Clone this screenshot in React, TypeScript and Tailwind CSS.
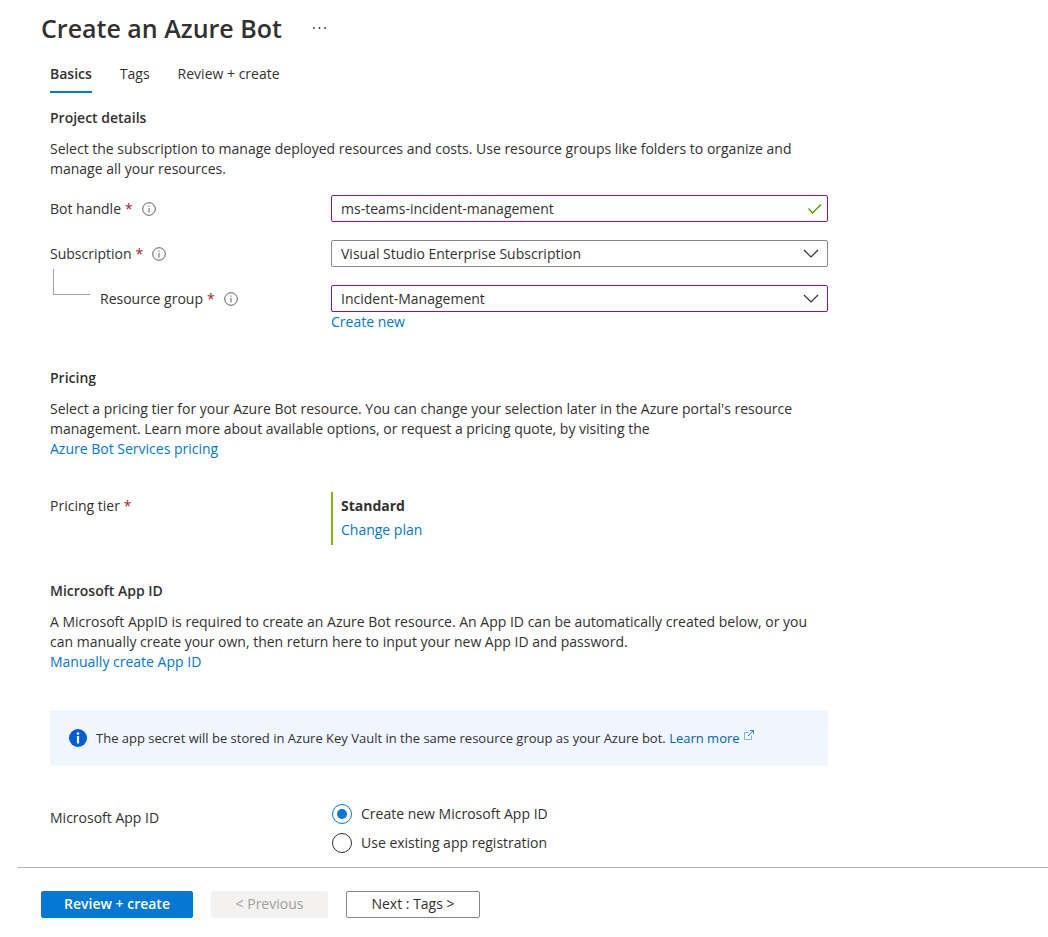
import { useState, type ReactNode } from "react";

const linkClass = "text-[#0078d4] hover:underline";

function InfoIcon() {
  return (
    <svg className="size-[14px] shrink-0" viewBox="0 0 14 14" fill="none" stroke="#605e5c" aria-hidden="true">
      <circle cx="7" cy="7" r="6.3" />
      <path d="M7 6v4.5M7 3.6v1.2" />
    </svg>
  );
}

function Chevron() {
  return (
    <svg className="pointer-events-none absolute top-2 right-[9px] h-3 w-4" viewBox="0 0 16 12" fill="none" stroke="#323130" strokeWidth="1.2" aria-hidden="true">
      <path d="M1 2l7 7 7-7" />
    </svg>
  );
}

function Required() {
  return <span className="ml-1 text-[#a4262c]">*</span>;
}

function FieldLabel({ htmlFor, children }: { htmlFor: string; children: ReactNode }) {
  return (
    <div className="flex h-[27px] items-center gap-[9px]">
      <label htmlFor={htmlFor}>
        {children}
        <Required />
      </label>
      <InfoIcon />
    </div>
  );
}

function Heading({ children }: { children: ReactNode }) {
  return <h2 className="mb-[11px] font-semibold">{children}</h2>;
}

const rowClass = "grid grid-cols-[281px_minmax(0,1fr)]";
const boxClass = "block h-[27px] w-full appearance-none rounded-xs border bg-white pr-8 pl-[9px] outline-none";
const radioClass =
  "grid size-5 shrink-0 appearance-none place-content-center rounded-full border border-[#323130] before:size-[10px] before:rounded-full checked:border-[#0078d4] checked:before:bg-[#0078d4]";

export default function App() {
  const [handle, setHandle] = useState("ms-teams-incident-management");
  const [appId, setAppId] = useState("new");

  return (
    <div className="flex min-h-screen flex-col bg-white font-['Open_Sans','Noto_Sans',sans-serif] text-sm leading-5 text-[#323130]">
      <header className="flex items-center gap-[30px] px-[41px] pt-[11px]">
        <h1 className="text-[25px] leading-[34px] font-semibold">Create an Azure Bot</h1>
        <button type="button" aria-label="More actions">
          <svg className="h-1 w-4" viewBox="0 0 16 4" fill="#323130" aria-hidden="true">
            <circle cx="2" cy="2" r="0.9" />
            <circle cx="7.5" cy="2" r="0.9" />
            <circle cx="13" cy="2" r="0.9" />
          </svg>
        </button>
      </header>

      <main className="w-full max-w-[878px] flex-1 px-[50px] pt-[19px]">
        <nav className="flex gap-7">
          <a href="#basics" aria-current="page" className="border-b-2 border-[#0078d4] pb-[7px] font-semibold">Basics</a>
          <a href="#tags">Tags</a>
          <a href="#review">Review + create</a>
        </nav>

        <section className="mt-[15px]">
          <Heading>Project details</Heading>
          <p className="max-w-[760px]">
            Select the subscription to manage deployed resources and costs. Use resource groups like folders to organize and manage all your resources.
          </p>
          <div className="mt-4 flex flex-col gap-[18px]">
            <div className={rowClass}>
              <FieldLabel htmlFor="handle">Bot handle</FieldLabel>
              <div className="relative h-[27px]">
                <input id="handle" className={`${boxClass} border-[#881798]`} value={handle} onChange={(e) => setHandle(e.target.value)} />
                <svg className="pointer-events-none absolute top-2 right-[6px] h-3 w-[14px]" viewBox="0 0 14 12" fill="none" stroke="#57a300" strokeWidth="1.5" aria-hidden="true">
                  <path d="M.5 5.500l4 4.500 8.500-8.500" />
                </svg>
              </div>
            </div>
            <div className={rowClass}>
              <FieldLabel htmlFor="subscription">Subscription</FieldLabel>
              <div className="relative h-[27px]">
                <select id="subscription" className={`${boxClass} border-[#8a8886]`}>
                  <option>Visual Studio Enterprise Subscription</option>
                </select>
                <Chevron />
              </div>
            </div>
            <div className={rowClass}>
              <div className="flex gap-[10px] pl-[3px]">
                <span className="-mt-4 h-[26px] w-[37px] border-b border-l border-[#a19f9d]" />
                <FieldLabel htmlFor="group">Resource group</FieldLabel>
              </div>
              <div>
                <div className="relative h-[27px]">
                  <select id="group" className={`${boxClass} border-[#881798]`}>
                    <option>Incident-Management</option>
                  </select>
                  <Chevron />
                </div>
                <a href="#new-group" className={`${linkClass} block`}>Create new</a>
              </div>
            </div>
          </div>
        </section>

        <section className="mt-9">
          <Heading>Pricing</Heading>
          <p className="max-w-[760px]">
            Select a pricing tier for your Azure Bot resource. You can change your selection later in the Azure portal's resource management. Learn more about available options, or request a pricing quote, by visiting the
          </p>
          <a href="#pricing" className={linkClass}>Azure Bot Services pricing</a>
          <div className={`${rowClass} mt-[33px]`}>
            <div className="pt-1">
              Pricing tier
              <Required />
            </div>
            <div className="flex h-[53px] flex-col items-start gap-1 border-l-2 border-[#7fba00] pt-1 pl-2">
              <strong className="font-bold">Standard</strong>
              <a href="#plan" className={linkClass}>Change plan</a>
            </div>
          </div>
        </section>

        <section className="mt-9">
          <Heading>Microsoft App ID</Heading>
          <p className="max-w-[760px]">
            A Microsoft AppID is required to create an Azure Bot resource. An App ID can be automatically created below, or you can manually create your own, then return here to input your new App ID and password.
          </p>
          <a href="#app-id" className={linkClass}>Manually create App ID</a>

          <div className="mt-[38px] flex min-h-14 items-center gap-[9px] rounded-xs bg-[#eff6ff] px-[19px] text-[13px]">
            <svg className="size-[18px] shrink-0" viewBox="0 0 18 18" aria-hidden="true">
              <circle cx="9" cy="9" r="9" fill="#015cda" />
              <circle cx="9" cy="4.600" r="1.300" fill="#fff" />
              <rect x="7.900" y="7" width="2.200" height="7.500" rx="0.400" fill="#fff" />
            </svg>
            <p>
              The app secret will be stored in Azure Key Vault in the same resource group as your Azure bot.{" "}
              <a href="#learn" className="text-[#0065b3] hover:underline">
                Learn more
                <svg className="mb-2 ml-1 inline size-[10px]" viewBox="0 0 10 10" fill="none" stroke="#7db4e0" aria-hidden="true">
                  <path d="M4.500 2.500h-4v7h7v-4" />
                  <path d="M4 6l5-5M6 .500h3.500V4" stroke="#2b80c5" />
                </svg>
              </a>
            </p>
          </div>

          <div role="radiogroup" aria-labelledby="app-id-label" className={`${rowClass} mt-[38px]`}>
            <span id="app-id-label" className="pt-1">Microsoft App ID</span>
            <div className="flex flex-col gap-[9px] pl-px">
              <label className="flex items-center gap-[9px]">
                <input type="radio" name="app-id" className={radioClass} checked={appId === "new"} onChange={() => setAppId("new")} />
                Create new Microsoft App ID
              </label>
              <label className="flex items-center gap-[9px]">
                <input type="radio" name="app-id" className={radioClass} checked={appId === "existing"} onChange={() => setAppId("existing")} />
                Use existing app registration
              </label>
            </div>
          </div>
        </section>
      </main>

      <footer className="mt-[14px] ml-[18px] flex gap-[18px] border-t border-[#b3b0ad] pt-[23px] pr-6 pb-[19px] pl-[23px]">
        <button type="button" className="h-[27px] w-[152px] rounded-xs border border-[#0078d4] bg-[#0078d4] pb-0.5 font-semibold text-white">Review + create</button>
        <button type="button" disabled className="h-[27px] w-[117px] rounded-xs border border-[#f3f2f1] bg-[#f3f2f1] pb-0.5 font-medium text-[#a19f9d]">&lt; Previous</button>
        <button type="button" className="h-[27px] w-[134px] rounded-xs border border-[#8a8886] bg-white pb-0.5 font-medium">Next : Tags &gt;</button>
      </footer>
    </div>
  );
}
